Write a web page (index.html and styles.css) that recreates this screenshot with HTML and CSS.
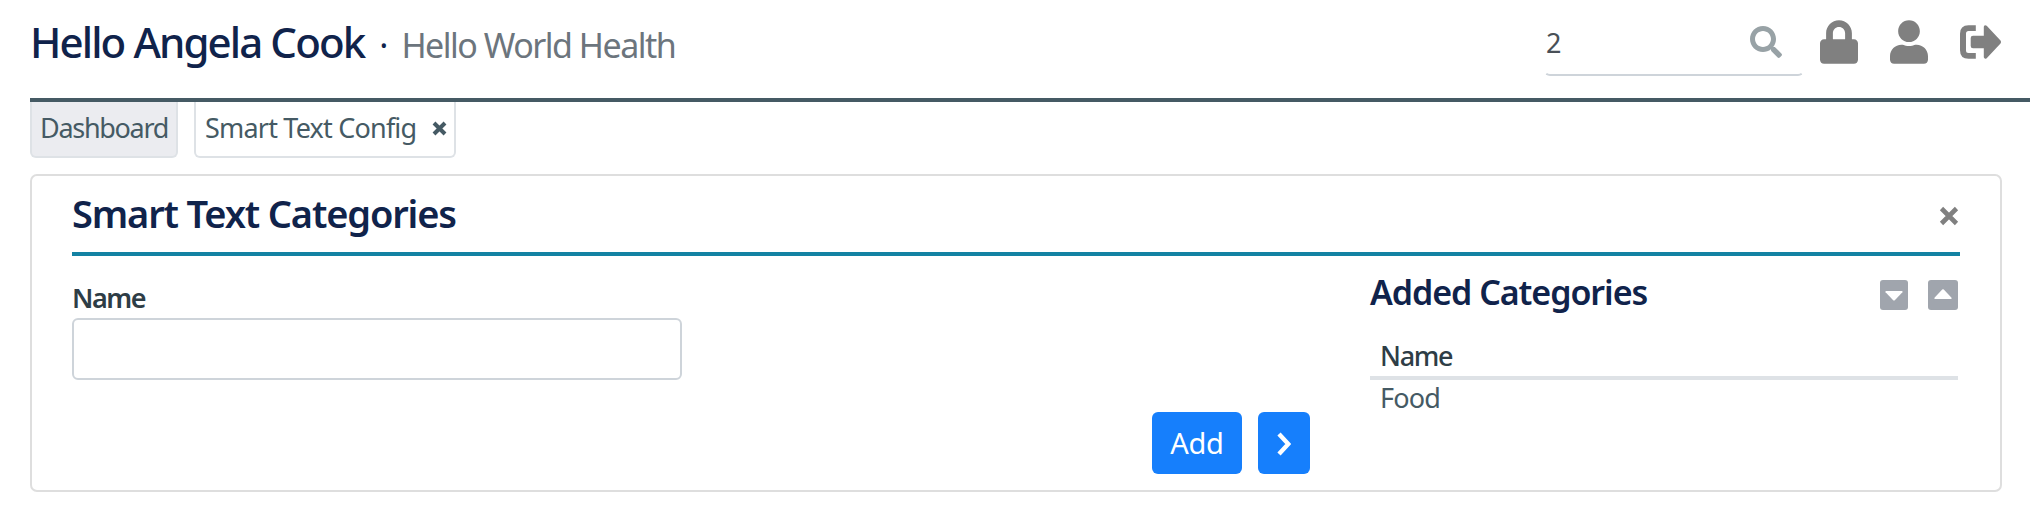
FILE: index.html
```
<!DOCTYPE html>
<html lang="en">
<head>
    <meta charset="UTF-8">
    <meta name="viewport" content="width=device-width, initial-scale=1.0">
    <title>Smart Text Config</title>
    <link rel="stylesheet" href="styles.css">
</head>
<body>

    <header class="top-bar">
        <h1 class="greeting">Hello Angela Cook</h1>
        <span class="dot">·</span>
        <span class="company">Hello World Health</span>
        <div class="search">
            <input class="search-input" type="text" value="2" aria-label="Search">
            <svg class="search-icon" viewBox="0 0 512 512"><path d="M505 442.700L405.300 343c-4.500-4.500-10.600-7-17-7H372c27.600-35.300 44-79.700 44-128C416 93.100 322.900 0 208 0S0 93.100 0 208s93.100 208 208 208c48.300 0 92.700-16.400 128-44v16.300c0 6.400 2.500 12.500 7 17l99.700 99.700c9.400 9.400 24.600 9.400 33.900 0l28.300-28.300c9.400-9.400 9.400-24.600.1-34zM208 336c-70.700 0-128-57.200-128-128 0-70.700 57.200-128 128-128 70.700 0 128 57.200 128 128 0 70.700-57.200 128-128 128z"/></svg>
        </div>
        <nav class="user-links">
            <svg class="lock-icon" viewBox="0 0 448 512"><path d="M400 224h-24v-72C376 68.200 307.800 0 224 0S72 68.200 72 152v72H48c-26.500 0-48 21.500-48 48v192c0 26.500 21.500 48 48 48h352c26.500 0 48-21.500 48-48V272c0-26.500-21.500-48-48-48zm-104 0H152v-72c0-39.700 32.300-72 72-72s72 32.300 72 72v72z"/></svg>
            <svg class="user-icon" viewBox="0 0 448 512"><path d="M224 256c70.700 0 128-57.300 128-128S294.700 0 224 0 96 57.300 96 128s57.300 128 128 128zm89.600 32h-16.700c-22.200 10.200-46.900 16-72.900 16s-50.600-5.800-72.900-16h-16.700C60.200 288 0 348.200 0 422.400V464c0 26.500 21.500 48 48 48h352c26.500 0 48-21.500 48-48v-41.600c0-74.200-60.200-134.400-134.400-134.400z"/></svg>
            <svg class="logout-icon" viewBox="0 0 41 34"><path d="M15.800.3V6H8.500Q6 6 6 8.500v17Q6 28 8.500 28h7.300v5.700H8.500Q0 33.700 0 25.200V8.800Q0 .3 8.500.3z"/><path d="M13 10.800h10.800V1.700Q24.600-.6 26.700.8l13.800 14.700q1 1.500 0 3L26.700 33.200q-2.100 1.400-2.900-.9v-9.100H13Q10.700 23.200 10.700 21v-8q0-2.200 2.300-2.200z"/></svg>
        </nav>
    </header>

    <nav class="tabs">
        <a class="tab tab-home">Dashboard</a>
        <a class="tab">Smart Text Config
            <svg class="tab-close" viewBox="0 0 15 15"><path d="M2 2l11 11M13 2L2 13"/></svg>
        </a>
    </nav>

    <main class="card">
        <div class="card-header">
            <h2 class="card-title">Smart Text Categories</h2>
            <svg class="card-close" viewBox="0 0 20 20"><path d="M2.500 2.500l15 15M17.500 2.500l-15 15"/></svg>
        </div>
        <div class="card-body">
            <form class="category-form">
                <label class="field-label" for="name">Name</label>
                <input class="field-input" type="text" id="name">
                <div class="form-buttons">
                    <button class="btn btn-add" type="button">Add</button>
                    <button class="btn btn-next" type="button" aria-label="Next">
                        <svg class="chevron" viewBox="0 0 14 24"><path d="M2 2l9.300 10L2 22"/></svg>
                    </button>
                </div>
            </form>
            <section class="added">
                <div class="added-header">
                    <h3 class="added-title">Added Categories</h3>
                    <div class="sort-buttons">
                        <svg class="sort sort-down" viewBox="0 0 28 30"><rect width="28" height="30" rx="3"/><path d="M6 11h16q1 .4.400 1.200l-7.600 8q-.8.800-1.600 0l-7.600-8Q5 11.400 6 11z"/></svg>
                        <svg class="sort sort-up" viewBox="0 0 30 30"><rect width="30" height="30" rx="3"/><path d="M7 19h16q1.200-.4.500-1.200l-7.700-8.200q-.8-.8-1.600 0l-7.700 8.200Q5.800 18.600 7 19z"/></svg>
                    </div>
                </div>
                <table class="added-table">
                    <thead><tr><th>Name</th></tr></thead>
                    <tbody><tr><td>Food</td></tr></tbody>
                </table>
            </section>
        </div>
    </main>

</body>
</html>
```

FILE: styles.css
```
* {
    box-sizing: border-box;
}

body {
    margin: 0;
    padding-left: 30px;
    font-family: "Noto Sans", sans-serif;
    font-size: 27px;
    color: #455a64;
    background-color: #fff;
}

h1, h2, h3 {
    margin: 0;
    color: #10234b;
}

/* Header */
.top-bar {
    display: flex;
    height: 102px;
    padding-right: 29px;
    border-bottom: 4px solid #455a64;
}

.greeting {
    font-size: 42px;
    font-weight: 500;
    line-height: 84px;
    letter-spacing: -1.9px;
}

.dot {
    margin: 0 13px 0 15px;
    font-size: 34px;
    line-height: 90px;
    color: #10234b;
}

.company {
    font-size: 34px;
    line-height: 91px;
    letter-spacing: -1.5px;
    color: #6c757d;
}

.search {
    display: flex;
    align-items: center;
    width: 260px;
    height: 62px;
    margin: 14px 16px 0 auto;
    padding: 0 20px 6px 0;
    border: 2px solid transparent;
    border-bottom-color: #ced4da;
    border-radius: 6px;
}

.search-input {
    flex: 1;
    min-width: 0;
    padding: 0;
    border: none;
    outline: none;
    font-family: inherit;
    font-size: 27px;
    color: #495057;
}

.search-icon {
    width: 32px;
    height: 32px;
    fill: #98a2a6;
}

.user-links {
    display: flex;
    gap: 32px;
    height: 84px;
    align-items: center;
    fill: #808080;
}

.lock-icon, .user-icon {
    width: 38px;
    height: 44px;
}

.logout-icon {
    width: 41px;
    height: 34px;
}

/* Tabs */
.tabs {
    display: flex;
    gap: 16px;
}

.tab {
    display: flex;
    align-items: center;
    height: 56px;
    padding: 0 7px 4px 9px;
    border: 2px solid #dee2e6;
    border-top: none;
    border-radius: 0 0 6px 6px;
    letter-spacing: -0.8px;
}

.tab-home {
    width: 148px;
    padding-left: 8px;
    background-color: #ebecf0;
    letter-spacing: -1.3px;
}

.tab-close {
    width: 15px;
    height: 15px;
    margin: 3px 0 0 16px;
    fill: none;
    stroke: #455a64;
    stroke-width: 4;
}

/* Card */
.card {
    width: 1972px;
    height: 318px;
    margin-top: 16px;
    padding: 0 40px;
    border: 2px solid #dedede;
    border-radius: 7px;
}

.card-header {
    display: flex;
    justify-content: space-between;
    align-items: center;
    height: 80px;
    padding-bottom: 2px;
    border-bottom: 4px solid #1382a3;
}

.card-title {
    font-size: 38px;
    font-weight: 600;
    line-height: 74px;
    letter-spacing: -1.15px;
}

.card-close {
    width: 20px;
    height: 20px;
    margin: 5px 1px 0 0;
    fill: none;
    stroke: #808080;
    stroke-width: 4.6;
}

.card-body {
    display: flex;
    gap: 60px;
}

.category-form {
    width: 1238px;
    padding-top: 23px;
}

.field-label {
    display: block;
    margin-bottom: 1px;
    font-weight: 600;
    line-height: 38px;
    letter-spacing: -1.5px;
    color: #2e3d46;
}

.field-input {
    display: block;
    width: 610px;
    height: 62px;
    border: 2px solid #ced4da;
    border-radius: 6px;
}

.form-buttons {
    display: flex;
    justify-content: flex-end;
    gap: 16px;
    margin-top: 32px;
}

.btn {
    display: flex;
    align-items: center;
    justify-content: center;
    height: 62px;
    padding: 0;
    border: none;
    border-radius: 6px;
    font-family: inherit;
    font-size: 29px;
    color: #fff;
    background-color: #167ffc;
}

.btn-add {
    width: 90px;
    padding-bottom: 2px;
    letter-spacing: -0.3px;
}

.btn-next {
    width: 52px;
}

.chevron {
    width: 14px;
    height: 24px;
    margin-top: 2px;
    fill: none;
    stroke: #fff;
    stroke-width: 4.4;
}

/* Added categories */
.added {
    width: 588px;
    padding-top: 17px;
}

.added-header {
    display: flex;
    justify-content: space-between;
}

.added-title {
    font-size: 34px;
    font-weight: 600;
    line-height: 38px;
    letter-spacing: -1.05px;
}

.sort-buttons {
    display: flex;
    gap: 20px;
    padding-top: 7px;
}

.sort {
    height: 30px;
    fill: #a0a5ad;
}

.sort path {
    fill: #fff;
}

.sort-down {
    width: 28px;
}

.sort-up {
    width: 30px;
}

.added-table {
    width: 100%;
    margin-top: 23px;
    border-collapse: separate;
    border-spacing: 0;
    text-align: left;
    letter-spacing: -0.8px;
}

.added-table th {
    height: 46px;
    padding: 2px 10px 0;
    border-bottom: 4px solid #dee2e6;
    font-weight: 500;
    line-height: 38px;
    letter-spacing: -1.3px;
    color: #2e3d46;
}

.added-table td {
    padding: 1px 10px 0;
    line-height: 34px;
}
```
